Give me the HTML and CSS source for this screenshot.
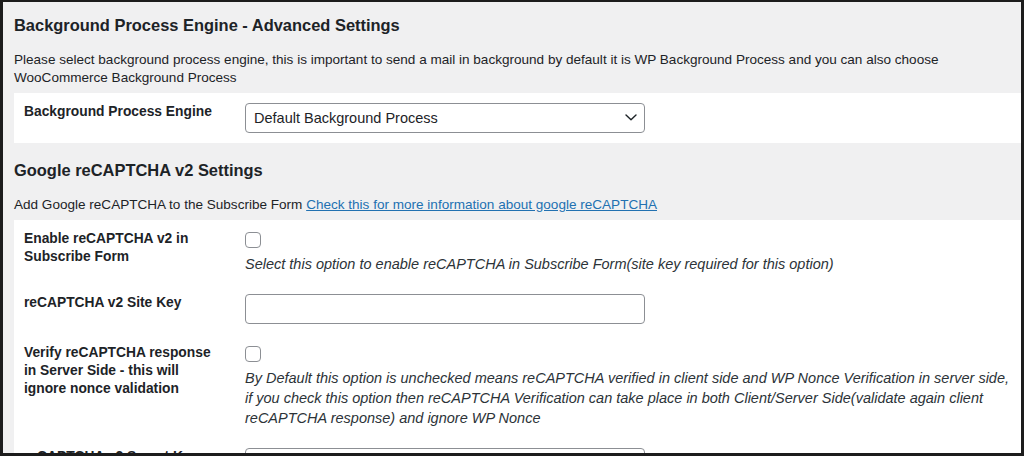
FILE: index.html
```html
<!DOCTYPE html>
<html>
<head>
<meta charset="utf-8">
<title>Advanced Settings</title>
<link rel="stylesheet" href="styles.css">
</head>
<body>
<div class="frame">
  <div class="wrap">
    <h2 class="title first">Background Process Engine - Advanced Settings</h2>
    <p class="intro">Please select background process engine, this is important to send a mail in background by default it is WP Background Process and you can also choose<br>WooCommerce Background Process</p>
    <div class="form-table">
      <div class="row">
        <div class="th">Background Process Engine</div>
        <div class="td">
          <div class="select">
            <span>Default Background Process</span>
            <svg class="chev" width="12" height="7" viewBox="0 0 12 7"><path d="M1 1 L6 5.8 L11 1" fill="none" stroke="#1d2327" stroke-width="1.4" stroke-linecap="round" stroke-linejoin="round"/></svg>
          </div>
        </div>
      </div>
    </div>

    <h2 class="title second">Google reCAPTCHA v2 Settings</h2>
    <p class="intro">Add Google reCAPTCHA to the Subscribe Form <a class="link" href="#">Check this for more information about google reCAPTCHA</a></p>
    <div class="form-table grow">
      <div class="row">
        <div class="th">Enable reCAPTCHA v2 in<br>Subscribe Form</div>
        <div class="td">
          <div class="checkbox"></div>
          <p class="desc">Select this option to enable reCAPTCHA in Subscribe Form(site key required for this option)</p>
        </div>
      </div>
      <div class="row">
        <div class="th">reCAPTCHA v2 Site Key</div>
        <div class="td"><div class="input"></div></div>
      </div>
      <div class="row">
        <div class="th">Verify reCAPTCHA response<br>in Server Side - this will<br>ignore nonce validation</div>
        <div class="td">
          <div class="checkbox"></div>
          <p class="desc">By Default this option is unchecked means reCAPTCHA verified in client side and WP Nonce Verification in server side,<br>if you check this option then reCAPTCHA Verification can take place in both Client/Server Side(validate again client<br>reCAPTCHA response) and ignore WP Nonce</p>
        </div>
      </div>
      <div class="row">
        <div class="th">reCAPTCHA v2 Secret Key</div>
        <div class="td"><div class="input"></div></div>
      </div>
    </div>
  </div>
</div>
</body>
</html>
```

FILE: styles.css
```css
html, body {
  margin: 0;
  padding: 0;
}

body {
  font-family: "Liberation Sans", Arial, sans-serif;
  color: #1d2327;
}

.frame {
  height: 456px;
  box-sizing: border-box;
  border: 3px solid #1c1c1c;
  border-top-width: 2px;
  background: #f0f0f1;
  overflow: hidden;
}

.wrap {
  padding-left: 11px;
  display: flex;
  flex-direction: column;
}

.title {
  margin: 12px 0 0;
  font-size: 16.45px;
  line-height: 22px;
  font-weight: 700;
}

.title.second {
  margin-top: 16px;
}

.intro {
  margin: 15px 0 6.5px;
  font-size: 13.55px;
  line-height: 17.5px;
  white-space: nowrap;
}

.link {
  color: #2271b1;
  text-decoration: underline;
}

.form-table {
  background: #fff;
}

.row {
  display: flex;
  align-items: flex-start;
}

.th {
  flex: none;
  width: 200px;
  padding: 10.5px 11px 10px 10px;
  font-size: 13.8px;
  line-height: 18px;
  font-weight: 700;
  white-space: nowrap;
}

.td {
  padding: 10px;
  font-size: 14px;
}

.select {
  width: 400px;
  height: 30px;
  box-sizing: border-box;
  border: 1px solid #8c8f94;
  border-radius: 4px;
  padding: 0 7px 0 8px;
  display: flex;
  align-items: center;
  justify-content: space-between;
  font-size: 14.5px;
  background: #fff;
}

.chev {
  display: block;
}

.input {
  width: 400px;
  height: 30px;
  box-sizing: border-box;
  border: 1px solid #8c8f94;
  border-radius: 4px;
  background: #fff;
}

.checkbox {
  width: 16px;
  height: 16px;
  box-sizing: border-box;
  margin-top: 2px;
  border: 1px solid #8c8f94;
  border-radius: 4px;
  background: #fff;
}

.desc {
  margin: 6px 0 0;
  font-style: italic;
  font-size: 14.5px;
  line-height: 20px;
  white-space: nowrap;
  color: #2c3338;
}
```
